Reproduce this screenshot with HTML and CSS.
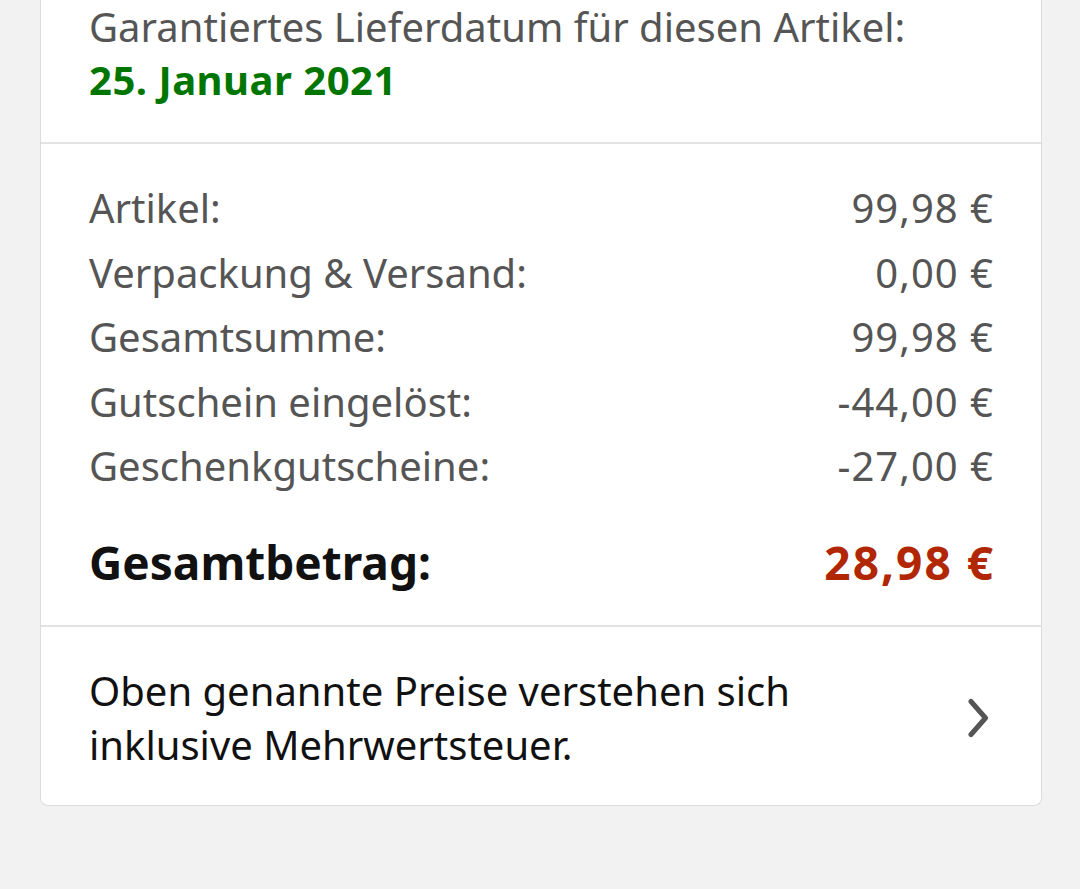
FILE: index.html
```html
<!DOCTYPE html>
<html lang="de">
<head>
    <meta charset="UTF-8">
    <meta name="viewport" content="width=device-width, initial-scale=1.0">
    <title>Bestellübersicht</title>
    <link rel="stylesheet" href="styles.css">
</head>
<body>
    <div class="card">
        <div class="section delivery">
            <div class="delivery-label">Garantiertes Lieferdatum für diesen Artikel:</div>
            <div class="delivery-date">25. Januar 2021</div>
        </div>
        <div class="section summary">
            <div class="row"><span>Artikel:</span><span class="price">99,98 €</span></div>
            <div class="row"><span>Verpackung &amp; Versand:</span><span class="price">0,00 €</span></div>
            <div class="row"><span>Gesamtsumme:</span><span class="price">99,98 €</span></div>
            <div class="row"><span>Gutschein eingelöst:</span><span class="price">-44,00 €</span></div>
            <div class="row"><span>Geschenkgutscheine:</span><span class="price">-27,00 €</span></div>
            <div class="row total"><span>Gesamtbetrag:</span><span class="price total-price">28,98 €</span></div>
        </div>
        <div class="section vat">
            <div class="vat-text">Oben genannte Preise verstehen sich inklusive Mehrwertsteuer.</div>
            <svg class="chevron" width="28" height="40" viewBox="0 0 28 40">
                <path d="M6 3.5 L20.5 20 L6 36.5" fill="none" stroke="#555" stroke-width="5" stroke-linecap="round" stroke-linejoin="round"/>
            </svg>
        </div>
    </div>
</body>
</html>
```

FILE: styles.css
```css
body {
    font-family: "Noto Sans", Arial, sans-serif;
    margin: 0;
    background-color: #f2f2f2;
    height: 889px;
    overflow: hidden;
}
.card {
    background-color: white;
    margin: 0 38px 0 40px;
    border: 1px solid #dcdcdc;
    border-top: none;
    border-radius: 0 0 8px 8px;
}
.section {
    padding: 0 48px;
}
.section + .section {
    border-top: 2px solid #e3e3e3;
}
.delivery {
    padding-bottom: 36px;
}
.delivery-label {
    color: #555;
    font-size: 40px;
    line-height: 53px;
}
.delivery-date {
    color: #007600;
    font-size: 40px;
    font-weight: bold;
    line-height: 53px;
    letter-spacing: 0.5px;
}
.summary {
    padding-top: 32px;
    padding-bottom: 28px;
}
.row {
    display: flex;
    justify-content: space-between;
    color: #555;
    font-size: 40px;
    line-height: 64.5px;
}
.price {
    letter-spacing: 1px;
    margin-right: -1px;
}
.row.total {
    color: #111;
    font-weight: bold;
    font-size: 46px;
    margin-top: 28px;
    line-height: 70px;
}
.total-price {
    color: #b12704;
    letter-spacing: 2px;
    margin-right: -2px;
}
.vat {
    display: flex;
    align-items: center;
    justify-content: space-between;
    padding-top: 37px;
    padding-bottom: 33px;
}
.vat-text {
    color: #111;
    font-size: 40px;
    line-height: 54px;
    width: 760px;
}
.chevron {
    flex-shrink: 0;
}
```
